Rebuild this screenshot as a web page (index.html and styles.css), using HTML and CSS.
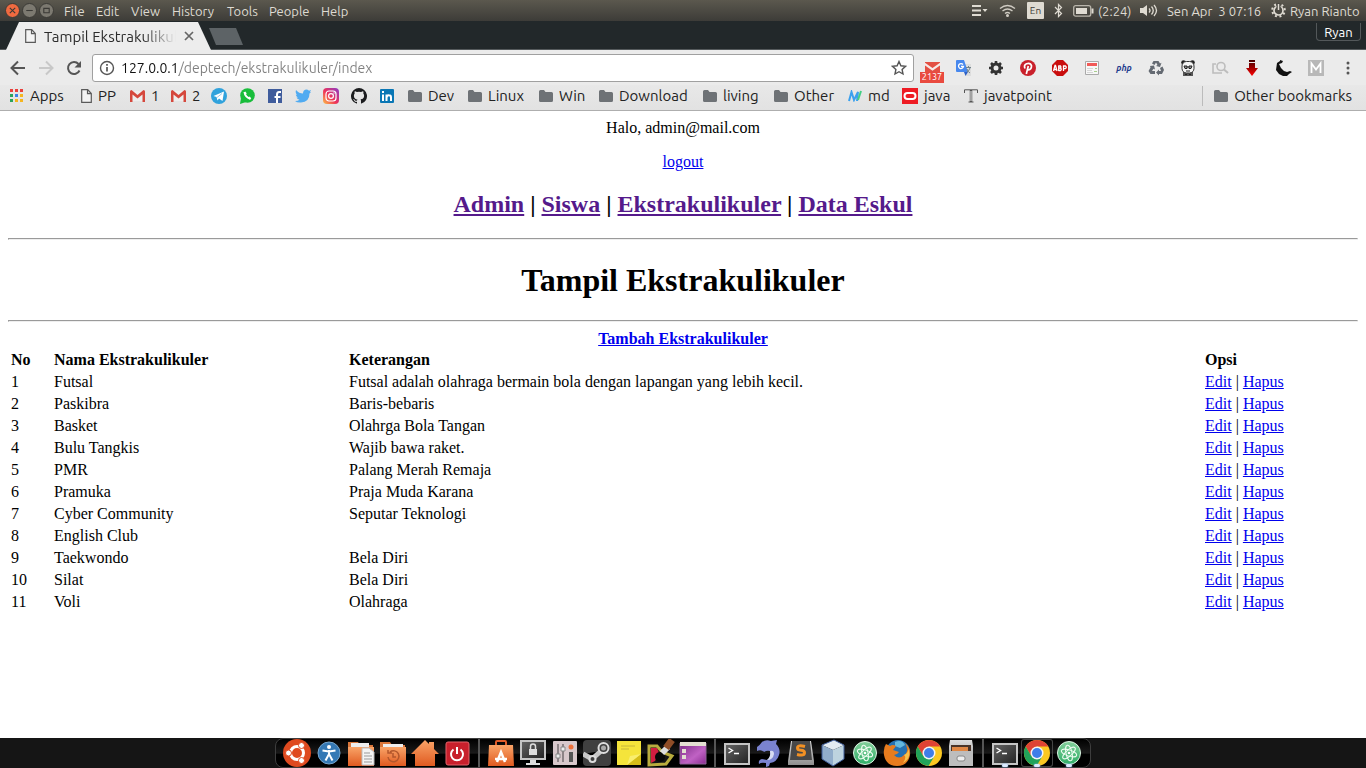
FILE: index.html
```html
<!DOCTYPE html>
<html lang="id">
<head>
<meta charset="utf-8">
<title>Tampil Ekstrakulikuler</title>
<link rel="stylesheet" href="styles.css">
</head>
<body>
<svg class="defs" width="0" height="0" aria-hidden="true">
  <defs>
    <linearGradient id="orange" x1="0" y1="0" x2="0" y2="1"><stop offset="0" stop-color="#f9a468"/><stop offset="1" stop-color="#e05a20"/></linearGradient>
    <linearGradient id="screen" x1="0" y1="0" x2="1" y2="1"><stop offset="0" stop-color="#666"/><stop offset="1" stop-color="#222"/></linearGradient>
    <linearGradient id="insta" x1="0" y1="1" x2="1" y2="0"><stop offset="0" stop-color="#fdc047"/><stop offset=".45" stop-color="#ee3358"/><stop offset="1" stop-color="#8a3bc9"/></linearGradient>
    <linearGradient id="green" x1="0" y1="0" x2="0" y2="1"><stop offset="0" stop-color="#84cf9b"/><stop offset="1" stop-color="#2fae67"/></linearGradient>
    <linearGradient id="purple" x1="0" y1="0" x2="1" y2="1"><stop offset="0" stop-color="#7a2a83"/><stop offset=".6" stop-color="#c062c4"/><stop offset="1" stop-color="#8b2d91"/></linearGradient>
    <linearGradient id="silver" x1="0" y1="0" x2="0" y2="1"><stop offset="0" stop-color="#ddd"/><stop offset="1" stop-color="#8e8e8e"/></linearGradient>
    <linearGradient id="red" x1="0" y1="0" x2="0" y2="1"><stop offset="0" stop-color="#400"/><stop offset="1" stop-color="#f00"/></linearGradient>
  </defs>
  <symbol id="folder" viewBox="0 0 14 12"><path fill="#6e7276" d="M0 1.5Q0 0 1.5 0H5l1.5 2h6Q14 2 14 3.500v7Q14 12 12.500 12h-11Q0 12 0 10.500z"/></symbol>
  <symbol id="page" viewBox="0 0 11 14"><path fill="#f4f4f4" stroke="#5a5a5a" stroke-width="1.200" d="M.7.700h6L10.300 4.500v8.800H.7zM6.500.700v4h4"/></symbol>
  <symbol id="gmail" viewBox="0 0 15 12"><path fill="#eee" d="M1 1h13v10H1z"/><path fill="#d5483d" d="M0 1.500Q0 0 1.500 0L7.500 5 13.500 0Q15 0 15 1.500V12h-2.500V4.500l-5 4-5-4V12H0z"/></symbol>
  <symbol id="chrome" viewBox="0 0 28 28"><circle cx="14" cy="14" r="13" fill="#fbc821"/><path fill="#de4334" d="M2.700 7.500A13 13 0 0 1 25.300 7.500H14L8.400 17.300z"/><path fill="#21a35a" d="M2.700 7.500A13 13 0 0 0 13.500 27l5.900-9.700H8.400z"/><circle cx="14" cy="14" r="6.500" fill="#f5f5f5"/><circle cx="14" cy="14" r="5" fill="#3f7ee8"/></symbol>
  <symbol id="terminal" viewBox="0 0 28 28"><rect x="2" y="5" width="24" height="20" fill="url(#screen)" stroke="#c4c4c4" stroke-width="2"/><path d="M5.500 9l4 2.500-4 2.500M11 14.500h5" fill="none" stroke="#fff" stroke-width="1.400"/></symbol>
  <symbol id="atom" viewBox="0 0 28 28"><circle cx="14" cy="14" r="11.500" fill="url(#green)" stroke="#dff5e5"/><g fill="none" stroke="#eefcf1"><ellipse cx="14" cy="14" rx="3" ry="8" transform="rotate(-12 14 14)"/><ellipse cx="14" cy="14" rx="3" ry="8" transform="rotate(48 14 14)"/><ellipse cx="14" cy="14" rx="3" ry="8" transform="rotate(108 14 14)"/></g><circle cx="14" cy="14" r="1.300" fill="#fff"/></symbol>
</svg>

<header class="menubar">
  <div class="window-buttons">
    <button class="win close" aria-label="Close"><svg viewBox="0 0 12 12"><path d="M3.500 3.500l5 5M8.500 3.500l-5 5"/></svg></button>
    <button class="win" aria-label="Minimize"><svg viewBox="0 0 12 12"><path d="M3 6h6"/></svg></button>
    <button class="win" aria-label="Maximize"><svg viewBox="0 0 12 12"><path d="M3.500 4h5v4h-5z"/></svg></button>
  </div>
  <nav class="menus">
    <button>File</button><button>Edit</button><button>View</button><button>History</button><button>Tools</button><button>People</button><button>Help</button>
  </nav>
  <div class="indicators">
    <svg width="16" height="13" viewBox="0 0 16 13" fill="#dfdbd2"><path d="M0 1h9v2H0zM0 5.500h9v2H0zM0 10h9v2H0zM10.500 5h5L13 8z"/></svg>
    <svg width="17" height="13" viewBox="0 0 17 13" fill="none" stroke="#cfcbc2" stroke-width="1.400"><path d="M1 4.500q7.500-6 15 0M3.500 7q5-4 10 0M6 9.500q2.500-2 5 0"/><circle cx="8.500" cy="11.500" r=".8" fill="#dfdbd2"/></svg>
    <span class="keyboard">En</span>
    <svg width="9" height="15" viewBox="0 0 9 15" fill="none" stroke="#dfdbd2" stroke-width="1.200"><path d="M1 4l6.500 6.500L4.500 13.500v-12L7.500 4.500 1 11"/></svg>
    <span class="pair"><svg width="21" height="12" viewBox="0 0 21 12"><rect x=".7" y=".7" width="17" height="10.500" rx="2" fill="none" stroke="#b9b5ab" stroke-width="1.300"/><path fill="#dfdbd2" d="M3 3h11v6H3zM18.500 3.500h2v5h-2z"/></svg>(2:24)</span>
    <svg width="18" height="13" viewBox="0 0 18 13" fill="none" stroke="#dfdbd2" stroke-width="1.300"><path fill="#dfdbd2" stroke="none" d="M0 4h3l4-3v11L3 9H0z"/><path d="M9 4.500q2 2 0 4M11.500 2.500q3.500 4 0 8M14 1q5 5.500 0 11"/></svg>
    <span>Sen Apr&nbsp; 3 07:16</span>
    <span class="pair"><svg width="15" height="15" viewBox="0 0 15 15" fill="none" stroke="#dfdbd2"><circle cx="7.500" cy="7.500" r="4.500" stroke-width="1.700"/><path stroke-width="2" stroke-dasharray="2 2.500" d="M5 1.500A6.300 6.300 0 1 0 10 1.500"/><path stroke="#4b4943" stroke-width="4" d="M7.500 0v6"/><path stroke-width="1.500" d="M7.500 1v6"/></svg>Ryan Rianto</span>
  </div>
</header>

<div class="tabstrip">
  <div class="tab"><svg width="11" height="14"><use href="#page"/></svg><span class="tab-title">Tampil Ekstrakulikuler</span><button class="plain" aria-label="Close tab"><svg width="10" height="10" viewBox="0 0 10 10" stroke="#666" stroke-width="1.700"><path d="M1 1l8 8M9 1L1 9"/></svg></button></div>
  <button class="new-tab" aria-label="New tab"></button>
  <button class="profile">Ryan</button>
</div>

<div class="toolbar">
  <div class="history">
    <button aria-label="Back"><svg width="16" height="16" viewBox="0 0 16 16" fill="none" stroke="#555" stroke-width="2"><path d="M15 8H2M8 1.500L1.500 8 8 14.500"/></svg></button>
    <button aria-label="Forward"><svg width="16" height="16" viewBox="0 0 16 16" fill="none" stroke="#c8c8c8" stroke-width="2"><path d="M1 8h13M8 1.500L14.500 8 8 14.500"/></svg></button>
    <button aria-label="Reload"><svg width="16" height="16" viewBox="0 0 16 16" fill="none" stroke="#555" stroke-width="2"><path d="M13.500 10.500A6 6 0 1 1 12.500 4"/><path fill="#555" stroke="none" d="M15 1v6.500H8.500z"/></svg></button>
  </div>
  <div class="address">
    <svg width="16" height="16" viewBox="0 0 16 16"><circle cx="8" cy="8" r="6.500" fill="none" stroke="#555" stroke-width="1.400"/><path stroke="#555" stroke-width="1.700" d="M8 7v4.500M8 4v1.700"/></svg>
    <input type="text" aria-label="Address" value="127.0.0.1/deptech/ekstrakulikuler/index">
    <button class="plain" aria-label="Bookmark this page"><svg width="16" height="16" viewBox="0 0 16 16" fill="none" stroke="#555" stroke-width="1.400"><path d="M8 1.500l1.900 4.300 4.600.5-3.400 3.100.9 4.600-4-2.300-4 2.300.9-4.600L1.500 6.300l4.600-.5z"/></svg></button>
  </div>
  <div class="extensions">
    <button aria-label="Mail"><svg width="17" height="12" viewBox="0 0 17 12"><path fill="#e34f43" d="M1 0h15v12H1z"/><path fill="none" stroke="#f7e9e7" stroke-width="2.200" d="M0 1.500l8.500 6 8.500-6"/></svg><span class="badge">2137</span></button>
    <button aria-label="Translate"><svg width="16" height="16" viewBox="0 0 16 16"><path fill="#ddd" d="M7 4h8v12H10z"/><path fill="#4788ee" d="M1 0h7l4 12H1q-1 0-1-1V1q0-1 1-1z"/><path fill="#2e61c5" d="M8 12h4l-2.500 4z"/><path fill="none" stroke="#fff" stroke-width="1.300" d="M7 4.500A2.500 2.500 0 1 0 7.500 6.500H5"/><path fill="none" stroke="#71838b" d="M10 7.500h5M12.500 6v1.500M14 8q-1 3-3 4M11 9q1 3 3 4"/></svg></button>
    <button aria-label="Settings extension"><svg width="16" height="16" viewBox="0 0 16 16" fill="none" stroke="#333"><circle cx="8" cy="8" r="4" stroke-width="3"/><g stroke-width="2.600"><path d="M8 1v3M8 12v3M1 8h3M12 8h3M3 3l2 2M11 11l2 2M13 3l-2 2M5 11l-2 2"/></g></svg></button>
    <button aria-label="Pinterest"><svg width="16" height="16" viewBox="0 0 16 16"><circle cx="8" cy="8" r="8" fill="#c9202b"/><path fill="none" stroke="#fff" stroke-width="1.700" d="M5 8.500Q3.500 5 6.500 3.700q4-1.200 5 2Q11.500 9.500 8.500 9.800 7.500 10 7.200 9M8.300 6L6.300 14"/></svg></button>
    <button aria-label="Adblock Plus"><svg width="16" height="16" viewBox="0 0 16 16"><path fill="#c90d0d" d="M5 0h6l5 5v6l-5 5H5l-5-5V5z"/><path fill="none" stroke="#fff" stroke-width="1.300" d="M1.500 11L3 5.500h.5L5 11M2 9.500h2.500M6.700 5.500V11M6.500 6h2q1 1 0 2h-2 2q1.500 1.200 0 2.500h-2M11.500 11V6h2q1.500 1.300 0 2.600h-2"/></svg></button>
    <button aria-label="News"><svg width="14" height="14" viewBox="0 0 14 14"><path fill="#f7f7f7" stroke="#aaa" d="M.5.500h13v13H.5z"/><path fill="#f15a57" d="M2 2h10v3H2z"/><path stroke="#d6d6d6" d="M2 7.500h6M2 9.500h5M2 11.500h6"/><path fill="#a7cf8d" d="M10 7h2v1h-2zM9 10h3v1H9z"/></svg></button>
    <button class="php">php</button>
    <button aria-label="Recycle"><svg width="16" height="16" viewBox="0 0 16 16" fill="#646a72"><path d="M5.500 1h5l1.500 2.500 1.500-.8L12 7 8 6l1.500-1L8 2.500 6.500 5 4 3.500zM2 6l4-.5L7 9.500l-1.500-.8L4 11h3v3H2.500L.5 11l2-3.500zM12 8l2.500-1.500L16 10l-2 4h-3v1.500L8 12.500 11 9.500V11h2z"/></svg></button>
    <button aria-label="Panda"><svg width="14" height="16" viewBox="0 0 14 16"><circle cx="2.500" cy="2.500" r="2.300" fill="#222"/><circle cx="11.500" cy="2.500" r="2.300" fill="#222"/><path fill="#555" d="M2 12h10v4H2z"/><rect x="1" y="1.500" width="12" height="11.500" rx="4.500" fill="#f5f5f5" stroke="#333"/><path fill="#999" stroke="#222" d="M3 6h3v2.500H4zM8 6h3l-1 2.500H8z"/><path fill="none" stroke="#222" d="M6 7h2M5 11h4M4 14.500h2M8 14.500h2"/></svg></button>
    <button aria-label="Search page"><svg width="18" height="16" viewBox="0 0 18 16" fill="none" stroke="#bdbdbd" stroke-width="1.600"><path d="M5 4H2v9h9"/><circle cx="10" cy="6.500" r="4"/><path stroke-width="2" d="M13 9.500l4 3.500"/></svg></button>
    <button aria-label="Downloader"><svg width="12" height="16" viewBox="0 0 12 16"><path fill="url(#red)" d="M3 0h6v2H3zM3 3h6v5h3l-6 8-6-8h3z"/></svg></button>
    <button aria-label="Runner"><svg width="16" height="16" viewBox="0 0 16 16"><path fill="#111" d="M1 3l3-2V0l3 1-1 2-3 1 2 4 3 3 3 1 3-1 2 1-3 2-3 3-3-1-4-2-3-4z"/></svg></button>
    <button aria-label="M extension"><svg width="16" height="16" viewBox="0 0 16 16"><path fill="#b8b8b8" d="M0 0h16v16H0z"/><path fill="none" stroke="#fff" stroke-width="1.800" d="M3.500 13V3.500l4.500 6 4.500-6V13"/></svg></button>
    <button aria-label="Menu"><svg width="4" height="14" viewBox="0 0 4 14" fill="#555"><circle cx="2" cy="2" r="1.500"/><circle cx="2" cy="7" r="1.500"/><circle cx="2" cy="12" r="1.500"/></svg></button>
  </div>
</div>

<nav class="bookmarks">
  <a href="#"><svg width="14" height="14" viewBox="0 0 14 14"><path fill="#e9403c" d="M0 0h3v3H0zM5 0h3v3H5zM10 0h3v3h-3z"/><path fill="#2aa35c" d="M0 5h3v3H0zM0 10h3v3H0z"/><path fill="#3b82e8" d="M5 5h3v3H5z"/><path fill="#f5b51e" d="M10 5h3v3h-3zM10 10h3v3h-3zM5 10h3v3H5z"/></svg>Apps</a>
  <a href="#"><svg width="11" height="14"><use href="#page"/></svg>PP</a>
  <a href="#"><svg width="15" height="12"><use href="#gmail"/></svg>1</a>
  <a href="#"><svg width="15" height="12"><use href="#gmail"/></svg>2</a>
  <a href="#" aria-label="Telegram"><svg width="16" height="16" viewBox="0 0 16 16"><circle cx="8" cy="8" r="8" fill="#30a2dc"/><path fill="#fff" d="M2.500 8L13 3.500 11.500 13 8 10.500l-1.500 2L5.500 9z"/><path stroke="#9bcbe8" d="M6 9.500l5-4"/></svg></a>
  <a href="#" aria-label="WhatsApp"><svg width="15" height="16" viewBox="0 0 15 16"><circle cx="7.500" cy="7.500" r="7.300" fill="#18bd3b"/><path fill="#18bd3b" d="M1 10l-1 6 6-2z"/><path fill="none" stroke="#fff" stroke-width="2" d="M4.500 4Q5 9 10.500 11M4.500 4l1.500 2M10.500 11L9 9"/></svg></a>
  <a href="#" aria-label="Facebook"><svg width="14" height="14" viewBox="0 0 14 14"><path fill="#3f5c9c" d="M0 0h14v14H0z"/><path fill="none" stroke="#fff" stroke-width="2" d="M9 14V5.500Q9 3 11 3h2M6.500 8h6"/></svg></a>
  <a href="#" aria-label="Twitter"><svg width="16" height="14" viewBox="0 0 16 14"><path fill="#50abf1" d="M1 1q3 3.500 7 3.500Q8 1 11 .5q2 0 3 1.300L16 1l-1 2 1 0-1.500 1.500Q14.500 13 6 13.500q-4 .3-6-1.500 3 0 4.500-1.300Q2.500 10.500 1.500 8.500H3Q1 7.500.8 5.500l1.400.4Q0 4 1 1z"/></svg></a>
  <a href="#" aria-label="Instagram"><svg width="16" height="16" viewBox="0 0 16 16"><rect width="16" height="16" rx="4" fill="url(#insta)"/><rect x="3" y="3" width="10" height="10" rx="3" fill="none" stroke="#fff" stroke-width="1.200"/><circle cx="8" cy="8" r="2.400" fill="none" stroke="#fff" stroke-width="1.200"/><circle cx="11" cy="5" r=".7" fill="#fff"/></svg></a>
  <a href="#" aria-label="GitHub"><svg width="16" height="16" viewBox="0 0 16 16"><path fill="#1b1c1e" d="M8 0a8 8 0 0 0-2.500 15.600c.4.100.5-.2.500-.4v-1.400c-2.200.5-2.700-1-2.700-1-.4-.9-.9-1.200-.9-1.200-.7-.5.100-.5.100-.5.800.1 1.200.8 1.200.8.700 1.200 1.900.9 2.300.7.100-.5.300-.9.500-1.100-1.800-.2-3.600-.9-3.600-4 0-.9.300-1.600.8-2.100-.1-.2-.4-1 .1-2.100 0 0 .7-.2 2.200.8a7.500 7.500 0 0 1 4 0c1.500-1 2.200-.8 2.200-.8.400 1.100.2 1.900.1 2.100.5.600.8 1.300.8 2.100 0 3.100-1.900 3.700-3.600 3.900.3.300.5.800.5 1.500v2.300c0 .2.100.5.500.4A8 8 0 0 0 8 0z"/></svg></a>
  <a href="#" aria-label="LinkedIn"><svg width="14" height="14" viewBox="0 0 14 14"><rect width="14" height="14" rx="1" fill="#0a77b5"/><path fill="none" stroke="#fff" stroke-width="2" d="M3 5.500V12M3 2v2M6.500 12V5.500M6.500 8.500Q7 6 9 6.200q2 0 2 2.300V12"/></svg></a>
  <a href="#"><svg width="14" height="12"><use href="#folder"/></svg>Dev</a>
  <a href="#"><svg width="14" height="12"><use href="#folder"/></svg>Linux</a>
  <a href="#"><svg width="14" height="12"><use href="#folder"/></svg>Win</a>
  <a href="#"><svg width="14" height="12"><use href="#folder"/></svg>Download</a>
  <a href="#"><svg width="14" height="12"><use href="#folder"/></svg>living</a>
  <a href="#"><svg width="14" height="12"><use href="#folder"/></svg>Other</a>
  <a href="#"><svg width="14" height="12" viewBox="0 0 14 12" fill="none" stroke-width="2"><path stroke="#3aa0ee" d="M1 11L3.500 2l2.500 8 4-8-1 9"/><path stroke="#42cf83" d="M10 10l3-9"/></svg>md</a>
  <a href="#"><svg width="16" height="16" viewBox="0 0 16 16"><path fill="#ee1c24" d="M0 0h16v16H0z"/><rect x="2.500" y="5" width="11" height="6" rx="3" fill="none" stroke="#fff" stroke-width="2"/></svg>java</a>
  <a href="#"><svg width="14" height="14" viewBox="0 0 14 14" fill="none" stroke="#555"><path d="M.5 4V.8h13V4M4.500 13h5"/><path stroke-width="2.500" d="M7 1v12"/><path stroke="#eee" d="M7 2v10"/></svg>javatpoint</a>
  <a class="other" href="#"><svg width="14" height="12"><use href="#folder"/></svg>Other bookmarks</a>
</nav>

<main class="content">
  <div>Halo, admin@mail.com</div>
  <p><a href="#">logout</a></p>
  <h2><a class="visited" href="#">Admin</a> | <a class="visited" href="#">Siswa</a> | <a class="visited" href="#">Ekstrakulikuler</a> | <a class="visited" href="#">Data Eskul</a></h2>
  <hr>
  <h1>Tampil Ekstrakulikuler</h1>
  <hr>
  <b><a href="#">Tambah Ekstrakulikuler</a></b>
  <table>
    <thead><tr><th class="no">No</th><th class="name">Nama Ekstrakulikuler</th><th>Keterangan</th><th class="options">Opsi</th></tr></thead>
    <tbody>
      <tr><td>1</td><td>Futsal</td><td>Futsal adalah olahraga bermain bola dengan lapangan yang lebih kecil.</td><td><a href="#">Edit</a> | <a href="#">Hapus</a></td></tr>
      <tr><td>2</td><td>Paskibra</td><td>Baris-bebaris</td><td><a href="#">Edit</a> | <a href="#">Hapus</a></td></tr>
      <tr><td>3</td><td>Basket</td><td>Olahrga Bola Tangan</td><td><a href="#">Edit</a> | <a href="#">Hapus</a></td></tr>
      <tr><td>4</td><td>Bulu Tangkis</td><td>Wajib bawa raket.</td><td><a href="#">Edit</a> | <a href="#">Hapus</a></td></tr>
      <tr><td>5</td><td>PMR</td><td>Palang Merah Remaja</td><td><a href="#">Edit</a> | <a href="#">Hapus</a></td></tr>
      <tr><td>6</td><td>Pramuka</td><td>Praja Muda Karana</td><td><a href="#">Edit</a> | <a href="#">Hapus</a></td></tr>
      <tr><td>7</td><td>Cyber Community</td><td>Seputar Teknologi</td><td><a href="#">Edit</a> | <a href="#">Hapus</a></td></tr>
      <tr><td>8</td><td>English Club</td><td></td><td><a href="#">Edit</a> | <a href="#">Hapus</a></td></tr>
      <tr><td>9</td><td>Taekwondo</td><td>Bela Diri</td><td><a href="#">Edit</a> | <a href="#">Hapus</a></td></tr>
      <tr><td>10</td><td>Silat</td><td>Bela Diri</td><td><a href="#">Edit</a> | <a href="#">Hapus</a></td></tr>
      <tr><td>11</td><td>Voli</td><td>Olahraga</td><td><a href="#">Edit</a> | <a href="#">Hapus</a></td></tr>
    </tbody>
  </table>
</main>

<footer class="taskbar">
  <div class="dock">
    <button aria-label="Ubuntu"><svg viewBox="0 0 28 28"><circle cx="14" cy="14" r="14" fill="#df4a1f"/><circle cx="14" cy="14" r="6.500" fill="none" stroke="#fff" stroke-width="3"/><g fill="#fff" stroke="#df4a1f"><circle cx="5.500" cy="14" r="3"/><circle cx="18.500" cy="6.500" r="3"/><circle cx="18.500" cy="21.500" r="3"/></g></svg></button>
    <button aria-label="Accessibility"><svg viewBox="0 0 28 28"><circle cx="14" cy="14" r="11" fill="#3579b5" stroke="#77a7cf"/><circle cx="14" cy="8" r="2" fill="#fff"/><path fill="none" stroke="#fff" stroke-width="2" d="M7.500 11.500l6.500 1 6.500-1M14 11v5M10.500 21.500L14 15l3.500 6.500"/></svg></button>
    <button aria-label="Documents"><svg viewBox="0 0 28 28"><path fill="#d9763a" d="M1 3h10l2 3h13v20H1z"/><path fill="#eee" d="M4 4h18v6H4z"/><path fill="url(#orange)" d="M1 8h26v19H1z"/><path fill="#f4f4f4" stroke="#bbb" d="M15 9h7l5 4v13H15z"/><path stroke="#999" d="M17 14h6M17 17h8M17 20h8M17 23h8"/></svg></button>
    <button aria-label="Recent files"><svg viewBox="0 0 28 28"><path fill="#d9763a" d="M1 3h10l2 3h13v20H1z"/><path fill="#eee" d="M4 5h20v6H4z"/><path fill="url(#orange)" d="M1 8h26v19H1z"/><path fill="none" stroke="#b4572c" stroke-width="1.500" d="M9 18a5.500 5.500 0 1 0 2-5M9 11v3h4M14 14v4h3"/></svg></button>
    <button aria-label="Home"><svg viewBox="0 0 28 28"><path fill="url(#orange)" d="M14 1l4 4V3h5v7l5 5h-4v12H4V15H0z"/></svg></button>
    <button aria-label="Power"><svg viewBox="0 0 28 28"><rect x="3" y="3" width="23" height="23" rx="2" fill="#c8202c" stroke="#e4636a"/><path fill="none" stroke="#fff" stroke-width="2" d="M10.500 10.500a6 6 0 1 0 7 0M14 8v7"/></svg></button>
    <i></i>
    <button aria-label="Software"><svg viewBox="0 0 28 28"><path fill="none" stroke="#df5b29" stroke-width="2" d="M9 9V3q0-1 1-1h8q1 0 1 1v6"/><path fill="url(#orange)" d="M2 6h24l1 21H1z"/><path fill="none" stroke="#fff" stroke-width="2.500" d="M10 23l4-10 4 10M8 20h12"/></svg></button>
    <button aria-label="Lock"><svg viewBox="0 0 28 28"><path fill="url(#screen)" stroke="#c6c6c6" stroke-width="2" d="M2 2h24v18H2z"/><path fill="#ddd" d="M11 21h6v3h4v2H7v-2h4zM10 10h8v6h-8z"/><path fill="none" stroke="#ddd" stroke-width="1.500" d="M11.500 11V7.500a2.500 2.500 0 0 1 5 0V11"/></svg></button>
    <button aria-label="Settings"><svg viewBox="0 0 28 28"><rect x="2" y="2" width="24" height="24" rx="1" fill="#d8c8cb"/><path stroke="#8d8386" stroke-width="2" d="M7 5v18M12 5v18"/><path fill="#eee" stroke="#888" d="M5 15h4v4H5zM10 8h4v4h-4z"/><circle cx="20" cy="8" r="2.500" fill="#ee713b"/><path fill="#555" d="M18 13h4v10h-4z"/></svg></button>
    <button aria-label="Steam"><svg viewBox="0 0 28 28"><rect x="0" y="1" width="28" height="26" rx="4" fill="#404040"/><path stroke="#c8c8c8" stroke-width="5" d="M0 15l9 5 9-8"/><g fill="#404040" stroke="#ddd" stroke-width="2"><circle cx="20.500" cy="9" r="5"/><circle cx="9.500" cy="20" r="3"/></g><circle cx="20.500" cy="9" r="2.500" fill="#aaa"/></svg></button>
    <button aria-label="Notes"><svg viewBox="0 0 28 28"><path fill="#f5e43b" d="M2 2h24v24H2z"/><path fill="#d5bd19" d="M26 15v11H12z"/><path fill="#f9ee6e" d="M12 26l3-9 11-2z"/><path stroke="#c6b63b" d="M6 7h14M6 10h8"/></svg></button>
    <button aria-label="Paint"><svg viewBox="0 0 28 28"><path fill="#151515" stroke="#b9ac3e" stroke-width="3" d="M2 26V7h8l5 6 10 4-6 8z"/><path fill="#d31d40" d="M4 9h6l2 5-4 8-4 2z"/><circle cx="13" cy="18" r="5" fill="#080808"/><path stroke="#dedede" stroke-width="6" d="M15 14l6-6"/><path stroke="#8f4d27" stroke-width="7" d="M19 9l6-8"/></svg></button>
    <button aria-label="Window"><svg viewBox="0 0 28 28"><path fill="url(#purple)" stroke="#92639a" d="M1 4h26v21H1z"/><path fill="#e3dfd1" d="M1 3h26v4H1zM3 10h4v4H3zM3 16h4v4H3z"/></svg></button>
    <i></i>
    <button aria-label="Terminal"><svg><use href="#terminal"/></svg></button>
    <button aria-label="Dolphin"><svg viewBox="0 0 28 28"><path fill="#7a83d0" d="M2 8q3-2 5-5 4-3 9-1l6-1-1 4q5 5 3 11-2 7-9 8l-1 3-3 1v-4q-5-1-7 1-1-4 3-5l5 1q5-2 3-9-3-1-6 1-3-3-7-1z"/><path fill="#d7dcf2" d="M15 12q4-1 4 3-1 6-7 6 4-3 3-9z"/></svg></button>
    <button aria-label="Sublime Text"><svg viewBox="0 0 28 28"><path fill="url(#silver)" d="M4 2h20l3 20v4H1v-4z"/><path fill="#484848" d="M5 2h18l2 19H3z"/><path fill="none" stroke="#f39124" stroke-width="3" d="M18 7.500Q10.500 5.500 10.500 9q0 2 3.500 2.200t3.500 2.500q0 3.500-7.500 1.800"/></svg></button>
    <button aria-label="VirtualBox"><svg viewBox="0 0 28 28"><path fill="#e2ebf2" d="M3 6l12-5 10 5-11 5z"/><path fill="#91adcb" d="M3 6l11 5v16L3 20z"/><path fill="#bdd3df" d="M14 11l11-5v14l-11 7z"/><path fill="none" stroke="#3f5d99" d="M3 6l12-5 10 5v14l-11 7-11-7z"/></svg></button>
    <button aria-label="Atom"><svg><use href="#atom"/></svg></button>
    <button aria-label="Firefox"><svg viewBox="0 0 28 28"><circle cx="15" cy="13" r="12" fill="#2471b2"/><path fill="#63b8df" d="M12 3q7-3 10 3l-5 3-5-2z"/><path fill="#e77c1e" d="M3 5l4 2q3-2 6 0l-3 4 6 2q-2 3-5 3 5 5 10 0 6-4 1-12 6 5 5 12-2 11-13 11T1 16Q0 9 3 5z"/><path fill="#f5c34c" d="M25 9q4 10-5 15 4-6 1-8 5-2 4-7z"/></svg></button>
    <button aria-label="Chrome"><svg><use href="#chrome"/></svg></button>
    <button aria-label="Files"><svg viewBox="0 0 28 28"><path fill="url(#silver)" d="M3 1h22l1 6v20H2V7z"/><path fill="#4a3428" d="M4 6h20v8H4z"/><path fill="#e08744" d="M5 8h16v5H5z"/><path fill="#bdbdbd" d="M2 12h24v15H2z"/><rect x="10" y="17" width="8" height="5" rx="2" fill="#eee" stroke="#888"/></svg></button>
    <i></i>
    <button class="running" aria-label="Terminal window"><svg><use href="#terminal"/></svg></button>
    <button class="running active" aria-label="Chrome window"><svg><use href="#chrome"/></svg></button>
    <button class="running" aria-label="Atom window"><svg><use href="#atom"/></svg></button>
  </div>
</footer>
</body>
</html>
```
FILE: styles.css
```css
* { box-sizing: border-box; }

body {
  margin: 0;
  min-height: 100vh;
  display: flex;
  flex-direction: column;
  background: #fff;
  color: #000;
  font-family: "Liberation Serif", "Times New Roman", serif;
  font-size: 16px;
}

svg { flex: none; }
.defs { position: absolute; }

button {
  border: 0;
  padding: 0;
  background: none;
  color: inherit;
  font: inherit;
}

.menubar, .tabstrip, .toolbar, .bookmarks {
  font-family: Ubuntu, "Noto Sans", sans-serif;
}

/* Desktop menu bar */
.menubar {
  display: flex;
  align-items: center;
  height: 21px;
  background: linear-gradient(#5b584e, #3d3c38);
  color: #dfdbd2;
  font-size: 13px;
  line-height: 20px;
  white-space: nowrap;
}

.window-buttons {
  display: flex;
  gap: 2px;
  width: 64px;
  padding-left: 5px;
}

.win {
  width: 15px;
  height: 15px;
  border: 1px solid #3b3a36;
  border-radius: 50%;
  background: #7c7970;
}

.win svg {
  display: block;
  width: 13px;
  height: 13px;
  fill: none;
  stroke: #3a3935;
}

.win.close { background: #f06a40; }

.menus {
  flex: 1;
  display: grid;
  grid-template-columns: 32px 35px 41px 55px 42px 52px 1fr;
}

.menus button { text-align: left; }

.indicators {
  display: grid;
  grid-template-columns: 27px 28px 27px 19px 67px 27px 104px 95px;
  align-items: center;
}

.keyboard {
  width: 17px;
  height: 17px;
  border-radius: 1px;
  background: #dfdbd2;
  color: #3c3b37;
  font-size: 10px;
  line-height: 17px;
  text-align: center;
}

.pair {
  display: flex;
  align-items: center;
  gap: 4px;
}

/* Browser tabs */
.tabstrip {
  display: flex;
  align-items: flex-start;
  height: 29px;
  padding: 0 5px 0 6px;
  background: #22282a;
  border-bottom: 1px solid #555a5c;
}

.tab {
  display: flex;
  align-items: center;
  width: 205px;
  height: 29px;
  padding: 1px 17px 0 19px;
  background: #ededed;
  clip-path: polygon(0 100%, 13px 1px, 192px 1px, 100% 100%);
  color: #2c2c2c;
  font-size: 15px;
}

.tab-title {
  flex: 1;
  margin: 0 8px;
  overflow: hidden;
  white-space: nowrap;
  mask-image: linear-gradient(90deg, #000 75%, transparent);
}

.plain { display: flex; }

.new-tab {
  width: 34px;
  height: 17px;
  margin-top: 7px;
  margin-left: -2px;
  background: #5d6366;
  clip-path: polygon(0 0, 27px 0, 100% 100%, 7px 100%);
}

.profile {
  width: 45px;
  height: 18px;
  margin: 2px 0 0 auto;
  border: 1px solid #53585a;
  border-top: 0;
  border-radius: 0 0 4px 4px;
  color: #fff;
  font-size: 13px;
  line-height: 16px;
}

/* Address bar */
.toolbar {
  display: flex;
  align-items: center;
  height: 35px;
  padding: 0 2px 0 4px;
  background: #ebebeb;
}

.history, .extensions { display: flex; }

.history button {
  display: flex;
  justify-content: center;
  width: 28px;
}

.address {
  flex: 1;
  display: flex;
  align-items: center;
  height: 28px;
  margin: 0 2px 0 4px;
  padding: 0 6px;
  border: 1px solid #a0a0a0;
  border-radius: 3px;
  background: #fff;
}

.address input {
  flex: 1;
  min-width: 0;
  margin-left: 6px;
  padding: 0;
  border: 0;
  background: linear-gradient(90deg, #111 58px, #808080 58px);
  background-clip: text;
  color: transparent;
  font-family: Ubuntu, "Open Sans", sans-serif;
  font-size: 14px;
}

.extensions button {
  position: relative;
  display: flex;
  align-items: center;
  justify-content: center;
  width: 32px;
  height: 28px;
}

.badge {
  position: absolute;
  left: 4px;
  right: 4px;
  bottom: -1px;
  height: 11px;
  background: #e94a3f;
  color: #fff;
  font-size: 9px;
  line-height: 11px;
}

.extensions .php {
  color: #223a8d;
  font-size: 9px;
  font-style: italic;
  font-weight: 700;
}

/* Bookmarks */
.bookmarks {
  display: grid;
  grid-template-columns: 71px 49px 41px 40px 29px 28px 27px 28px 28px 29px 28px 60px 71px 60px 104px 71px 74px 54px 62px 1fr auto;
  align-items: center;
  height: 26px;
  padding: 0 14px 3px 10px;
  background: linear-gradient(#e8e8e8, #e2e2e2);
  border-bottom: 1px solid #aeaeae;
  font-size: 15px;
  line-height: 20px;
  white-space: nowrap;
}

.bookmarks a {
  display: flex;
  align-items: center;
  gap: 6px;
  color: #222;
  text-decoration: none;
}

.bookmarks .other {
  padding-left: 11px;
  border-left: 1px solid #bbb;
}

/* Web page */
.content {
  flex: 1;
  padding: 8px;
  text-align: center;
}

.content p { margin: 16px 0; }
.content h2 { margin: 20px 0; font-size: 24px; }
.content h1 { margin: 21px 0; font-size: 32px; line-height: 38px; }
.content hr { margin: 8px 0; }
.content a { color: #0000ee; }
.content .visited { color: #551a8b; }

.content table {
  width: 100%;
  table-layout: fixed;
  border-spacing: 2px;
  text-align: left;
}

.content th, .content td {
  height: 20px;
  padding: 1px;
  text-align: left;
}

.content .no { width: 41px; }
.content .name { width: 293px; }
.content .options { width: 152px; }

/* Dock */
.taskbar {
  display: flex;
  justify-content: center;
  height: 30px;
  background: #151515;
}

.dock {
  display: flex;
  align-items: center;
  padding: 0 5px;
  border: 1px solid #3d3d3d;
  border-radius: 8px;
  background: linear-gradient(#000, #1a1a1a 50%, #000 55%);
}

.dock button {
  position: relative;
  display: flex;
  justify-content: center;
  width: 32px;
}

.dock svg {
  width: 28px;
  height: 28px;
}

.dock i {
  width: 2px;
  height: 28px;
  margin: 0 5px;
  background: #555;
}

.dock .active {
  border-radius: 3px;
  box-shadow: inset 0 0 0 1px #454545;
}

.running::after {
  content: "";
  position: absolute;
  bottom: 0;
  left: 13px;
  width: 6px;
  height: 3px;
  border-radius: 2px;
  background: #dcebff;
  box-shadow: 0 0 2px #79b4ff;
}
```
